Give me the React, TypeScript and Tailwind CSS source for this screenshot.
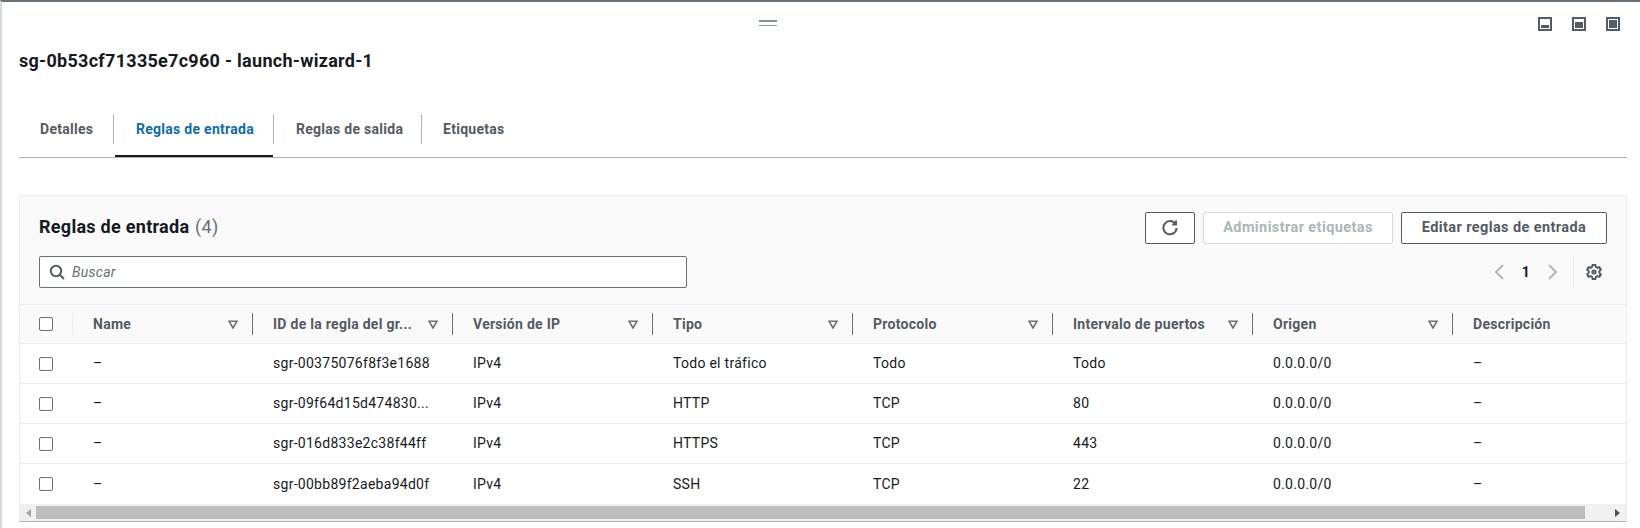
import React from "react";

const font = { fontFamily: 'Roboto, "Noto Sans", sans-serif' };

const columns = [
  { label: "Name", w: "w-[180px]" },
  { label: "ID de la regla del gr...", w: "w-[200px]" },
  { label: "Versión de IP", w: "w-[200px]" },
  { label: "Tipo", w: "w-[200px]" },
  { label: "Protocolo", w: "w-[200px]" },
  { label: "Intervalo de puertos", w: "w-[200px]" },
  { label: "Origen", w: "w-[200px]" },
];

const rows = [
  ["–", "sgr-00375076f8f3e1688", "IPv4", "Todo el tráfico", "Todo", "Todo", "0.0.0.0/0", "–"],
  ["–", "sgr-09f64d15d474830...", "IPv4", "HTTP", "TCP", "80", "0.0.0.0/0", "–"],
  ["–", "sgr-016d833e2c38f44ff", "IPv4", "HTTPS", "TCP", "443", "0.0.0.0/0", "–"],
  ["–", "sgr-00bb89f2aeba94d0f", "IPv4", "SSH", "TCP", "22", "0.0.0.0/0", "–"],
];

const widths = ["w-[180px]", "w-[200px]", "w-[200px]", "w-[200px]", "w-[200px]", "w-[200px]", "w-[200px]", "flex-1"];

function PanelIcon({ fill }: { fill: number }) {
  return (
    <svg width="14" height="14" viewBox="0 0 14 14">
      <rect x="1" y="1" width="12" height="12" fill="none" stroke="#545b64" strokeWidth="2" />
      <rect x="3" y={11 - fill} width="8" height={fill} fill="#545b64" />
    </svg>
  );
}

function Checkbox() {
  return <div className="h-[14px] w-[14px] rounded-[2px] border border-[#687078] bg-white" />;
}

function SortIcon() {
  return (
    <svg width="10" height="9" viewBox="0 0 10 9" className="shrink-0">
      <path d="M1 1.2h8L5 8z" fill="none" stroke="#687078" strokeWidth="1.6" strokeLinejoin="miter" />
    </svg>
  );
}

export default function App() {
  return (
    <div style={font} className="relative flex h-[528px] w-[1640px] flex-col overflow-hidden border-t-2 border-l-2 border-t-[#687078] border-l-[#d5dbdb] bg-white text-[14px] tracking-[0.28px] text-[#16191f]">
      {/* drag handle */}
      <div className="absolute left-[757px] top-[18px] flex w-[18px] flex-col gap-[3px]">
        <div className="h-[1.5px] bg-[#879596]" />
        <div className="h-[1.5px] bg-[#879596]" />
      </div>
      {/* panel layout toggles */}
      <div className="absolute right-[20px] top-[15px] flex gap-[20px]">
        <PanelIcon fill={3} />
        <PanelIcon fill={6} />
        <PanelIcon fill={8} />
      </div>

      <h1 className="ml-[17px] mt-[47px] text-[18px] font-bold leading-[24px] text-[#16191f]">
        sg-0b53cf71335e7c960 - launch-wizard-1
      </h1>

      {/* tabs */}
      <div className="ml-[17px] mr-[13px] mt-[41px] flex h-[44px] border-b border-[#a9b2b4]">
        <div className="flex h-[30px] w-[95px] items-center border-r border-[#aab7b8] pl-[21px] font-bold text-[#545b64]">Detalles</div>
        <div className="relative flex h-[30px] w-[160px] items-center border-r border-[#aab7b8] pl-[22px] font-bold text-[#0f6cab]">
          Reglas de entrada
          <div className="absolute left-[1px] right-0 top-[41px] h-[2px] bg-[#16191f]" />
        </div>
        <div className="flex h-[30px] w-[148px] items-center border-r border-[#aab7b8] pl-[22px] font-bold text-[#545b64]">Reglas de salida</div>
        <div className="flex h-[30px] items-center pl-[21px] font-bold text-[#545b64]">Etiquetas</div>
      </div>

      {/* container */}
      <div className="ml-[17px] mr-[13px] mt-[37px] flex h-[327px] flex-col border border-[#eaeded] border-b-[#aab7b8] bg-white">
        <div className="flex h-[108px] flex-col bg-[#fafafa] pl-[19px] pr-[19px] pt-[16px]">
          <div className="flex h-[32px] items-center justify-between">
            <div className="mb-[3px] text-[18px] font-bold text-[#16191f]">
              Reglas de entrada <span className="ml-[1px] font-normal text-[#687078]">(4)</span>
            </div>
            <div className="flex gap-[8px]">
              <button className="flex h-[32px] w-[50px] items-center justify-center rounded-[2px] border border-[#545b64] bg-white text-[#545b64]">
                <svg width="18" height="18" viewBox="0 0 18 18" fill="none" stroke="#545b64" strokeWidth="2">
                  <path d="M14.5 5A6.6 6.6 0 1 0 15.6 9" />
                  <path d="M15 1.6V5.4H11.2" />
                </svg>
              </button>
              <button className="h-[32px] w-[190px] rounded-[2px] border border-[#d5dbdb] bg-white text-[14.5px] font-bold tracking-[0.4px] text-[#aab7b8]">
                Administrar etiquetas
              </button>
              <button className="h-[32px] w-[206px] rounded-[2px] border border-[#545b64] bg-white text-[14.5px] font-bold tracking-[0.4px] text-[#545b64]">
                Editar reglas de entrada
              </button>
            </div>
          </div>
          <div className="mt-[12px] flex h-[32px] items-center justify-between">
            <div className="flex h-[32px] w-[648px] items-center rounded-[2px] border border-[#687078] bg-white pl-[9px]">
              <svg width="16" height="16" viewBox="0 0 16 16" fill="none" stroke="#545b64" strokeWidth="2">
                <circle cx="7" cy="7" r="5.2" />
                <path d="M11 11l4 4" />
              </svg>
              <span className="ml-[7px] italic text-[#687078]">Buscar</span>
            </div>
            <div className="flex h-[32px] items-center">
              <svg width="12" height="16" viewBox="0 0 12 16" fill="none" stroke="#aab7b8" strokeWidth="1.8">
                <path d="M10 1L3 8l7 7" />
              </svg>
              <span className="ml-[16px] w-[10px] text-center font-bold">1</span>
              <svg width="12" height="16" viewBox="0 0 12 16" fill="none" stroke="#aab7b8" strokeWidth="1.8" className="ml-[16px]">
                <path d="M2 1l7 7-7 7" />
              </svg>
              <div className="ml-[14px] h-[32px] w-[1px] bg-[#eaeded]" />
              <svg width="18" height="18" viewBox="0 0 18 18" fill="none" stroke="#545b64" strokeWidth="2" className="ml-[11px] mr-[4px]">
                <path d="M7.6 2h2.8l.5 1.9 1.6.9 1.9-.6 1.4 2.4-1.4 1.4v1.9l1.4 1.4-1.4 2.4-1.9-.6-1.6.9-.5 1.9H7.6l-.5-1.9-1.6-.9-1.9.6-1.4-2.4 1.4-1.4V8L2.2 6.6l1.4-2.4 1.9.6 1.6-.9z" />
                <circle cx="9" cy="9" r="1.6" />
              </svg>
            </div>
          </div>
        </div>

        {/* table header */}
        <div className="flex h-[40px] items-center border-y border-[#eaeded] bg-[#fafafa] font-bold text-[#545b64]">
          <div className="flex h-[22px] w-[53px] items-center border-r border-[#eaeded] pl-[19px]">
            <Checkbox />
          </div>
          {columns.map((c) => (
            <div key={c.label} className={`flex h-[22px] items-center justify-between border-r border-[#687078] pl-[20px] pr-[14px] ${c.w}`}>
              <span className="whitespace-nowrap">{c.label}</span>
              <SortIcon />
            </div>
          ))}
          <div className="flex-1 pl-[20px]">Descripción</div>
        </div>

        {/* rows */}
        {rows.map((r, i) => (
          <div key={i} className={`flex h-[40px] items-center text-[#16191f] ${i < 3 ? "border-b border-[#eaeded]" : ""}`}>
            <div className="w-[53px] pl-[19px]">
              <Checkbox />
            </div>
            {r.map((v, j) => (
              <div key={j} className={`whitespace-nowrap pl-[20px] ${widths[j]}`}>
                {v}
              </div>
            ))}
          </div>
        ))}

        {/* horizontal scrollbar */}
        <div className="flex h-[17px] items-center bg-[#f1f1f1]">
          <div className="flex w-[16px] justify-center">
            <svg width="5" height="8" viewBox="0 0 5 8"><path d="M5 0v8L0 4z" fill="#a3a3a3" /></svg>
          </div>
          <div className="h-[13px] w-[1549px] bg-[#bdbdbd]" />
          <div className="flex flex-1 justify-end pr-[6px]">
            <svg width="5" height="8" viewBox="0 0 5 8"><path d="M0 0v8l5-4z" fill="#505050" /></svg>
          </div>
        </div>
      </div>
    </div>
  );
}
